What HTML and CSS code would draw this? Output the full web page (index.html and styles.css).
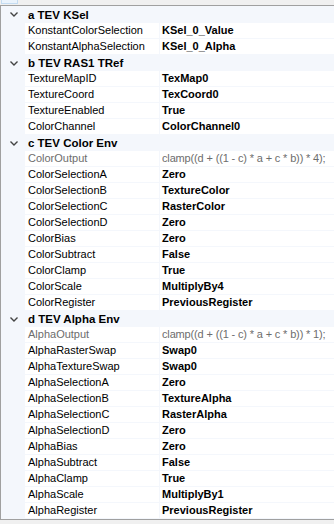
FILE: index.html
```html
<!DOCTYPE HTML><html>
<head>
  <title>TEV Properties</title>
  <meta name="viewport" content="width=device-width, initial-scale=1">
  <link rel="stylesheet" href="styles.css">
</head>
<body>
  <div class="toolbar"><div class="tbutton"></div></div>
  <div class="grid">
    <div class="cat first"><span class="chev"><svg width="8" height="5" viewBox="0 0 8 5"><path d="M0.5 0.5 L4 4 L7.5 0.5" fill="none" stroke="#444" stroke-width="1.4"/></svg></span>a TEV KSel</div>
    <div class="row"><div class="name">KonstantColorSelection</div><div class="val">KSel_0_Value</div></div>
    <div class="row"><div class="name">KonstantAlphaSelection</div><div class="val">KSel_0_Alpha</div></div>

    <div class="cat"><span class="chev"><svg width="8" height="5" viewBox="0 0 8 5"><path d="M0.5 0.5 L4 4 L7.5 0.5" fill="none" stroke="#444" stroke-width="1.4"/></svg></span>b TEV RAS1 TRef</div>
    <div class="row"><div class="name">TextureMapID</div><div class="val">TexMap0</div></div>
    <div class="row"><div class="name">TextureCoord</div><div class="val">TexCoord0</div></div>
    <div class="row"><div class="name">TextureEnabled</div><div class="val">True</div></div>
    <div class="row"><div class="name">ColorChannel</div><div class="val">ColorChannel0</div></div>

    <div class="cat"><span class="chev"><svg width="8" height="5" viewBox="0 0 8 5"><path d="M0.5 0.5 L4 4 L7.5 0.5" fill="none" stroke="#444" stroke-width="1.4"/></svg></span>c TEV Color Env</div>
    <div class="row disabled"><div class="name">ColorOutput</div><div class="val">clamp((d + ((1 - c) * a + c * b)) * 4);</div></div>
    <div class="row"><div class="name">ColorSelectionA</div><div class="val">Zero</div></div>
    <div class="row"><div class="name">ColorSelectionB</div><div class="val">TextureColor</div></div>
    <div class="row"><div class="name">ColorSelectionC</div><div class="val">RasterColor</div></div>
    <div class="row"><div class="name">ColorSelectionD</div><div class="val">Zero</div></div>
    <div class="row"><div class="name">ColorBias</div><div class="val">Zero</div></div>
    <div class="row"><div class="name">ColorSubtract</div><div class="val">False</div></div>
    <div class="row"><div class="name">ColorClamp</div><div class="val">True</div></div>
    <div class="row"><div class="name">ColorScale</div><div class="val">MultiplyBy4</div></div>
    <div class="row"><div class="name">ColorRegister</div><div class="val">PreviousRegister</div></div>

    <div class="cat"><span class="chev"><svg width="8" height="5" viewBox="0 0 8 5"><path d="M0.5 0.5 L4 4 L7.5 0.5" fill="none" stroke="#444" stroke-width="1.4"/></svg></span>d TEV Alpha Env</div>
    <div class="row disabled"><div class="name">AlphaOutput</div><div class="val">clamp((d + ((1 - c) * a + c * b)) * 1);</div></div>
    <div class="row"><div class="name">AlphaRasterSwap</div><div class="val">Swap0</div></div>
    <div class="row"><div class="name">AlphaTextureSwap</div><div class="val">Swap0</div></div>
    <div class="row"><div class="name">AlphaSelectionA</div><div class="val">Zero</div></div>
    <div class="row"><div class="name">AlphaSelectionB</div><div class="val">TextureAlpha</div></div>
    <div class="row"><div class="name">AlphaSelectionC</div><div class="val">RasterAlpha</div></div>
    <div class="row"><div class="name">AlphaSelectionD</div><div class="val">Zero</div></div>
    <div class="row"><div class="name">AlphaBias</div><div class="val">Zero</div></div>
    <div class="row"><div class="name">AlphaSubtract</div><div class="val">False</div></div>
    <div class="row"><div class="name">AlphaClamp</div><div class="val">True</div></div>
    <div class="row"><div class="name">AlphaScale</div><div class="val">MultiplyBy1</div></div>
    <div class="row"><div class="name">AlphaRegister</div><div class="val">PreviousRegister</div></div>
  </div>
</body>
</html>
```

FILE: styles.css
```css
html {
  font-family: "Liberation Sans", Arial, sans-serif;
  font-size: 11px;
  color: #000;
}
body {
  margin: 0;
  width: 334px;
  height: 524px;
  overflow: hidden;
  background-color: #f0f0f0;
}
.toolbar {
  height: 5px;
  overflow: hidden;
}
.tbutton {
  margin-left: 1px;
  width: 17px;
  height: 4px;
  box-sizing: border-box;
  border: 1px solid #c4dcf2;
  border-top: none;
  background-color: #eaf3fc;
}
.grid {
  width: 340px;
  border-top: 1px solid #a0a0a0;
  border-left: 1px solid #a0a0a0;
  border-bottom: 1px solid #a0a0a0;
  background-color: #fff;
}
.cat {
  display: flex;
  align-items: center;
  height: 16px;
  background-color: #f4f7fc;
  font-size: 11.5px;
  font-weight: bold;
  white-space: nowrap;
}
.cat.first {
  height: 17px;
}
.chev {
  display: flex;
  align-items: center;
  width: 27px;
  padding-left: 9px;
  box-sizing: border-box;
}
.row {
  display: flex;
  height: 16px;
  padding-left: 24px;
  background-color: #f4f7fc;
}
.name {
  width: 131px;
  height: 15px;
  line-height: 15px;
  padding-left: 3px;
  margin-right: 1px;
  background-color: #fff;
  white-space: nowrap;
  overflow: hidden;
}
.val {
  flex: 1;
  height: 15px;
  line-height: 15px;
  padding-left: 2px;
  background-color: #fff;
  font-weight: bold;
  white-space: nowrap;
  overflow: hidden;
}
.disabled .name,
.disabled .val {
  color: #6d6d6d;
  font-weight: normal;
}
.disabled .val {
  letter-spacing: -0.15px;
}
```
